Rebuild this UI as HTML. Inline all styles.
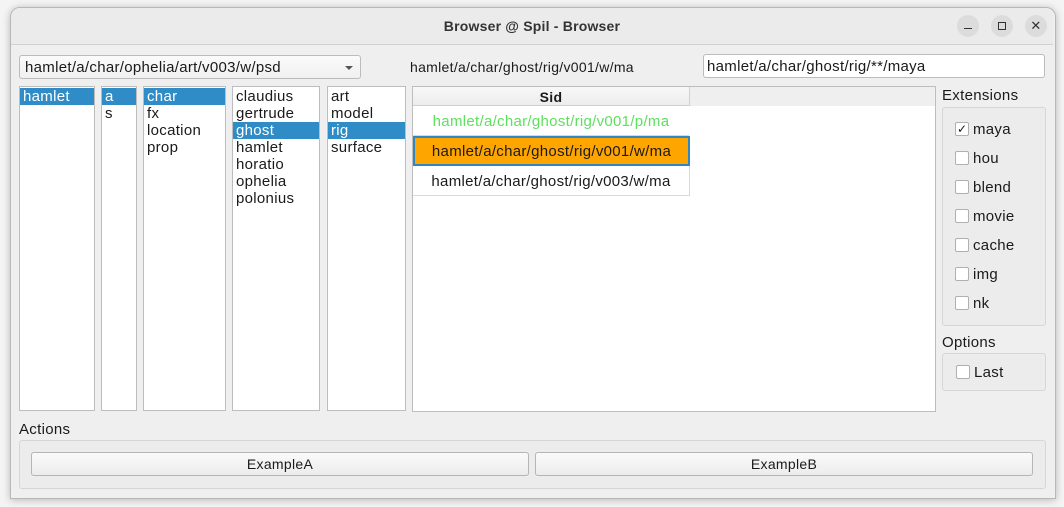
<!DOCTYPE html>
<html><head><style>
body{margin:0;width:1064px;height:507px;background:#f4f4f4;font-family:"Liberation Sans",sans-serif;font-size:15px;letter-spacing:0.3px;color:#1a1a1a;position:relative;overflow:hidden}
.a{position:absolute;white-space:nowrap}
.win{left:10px;top:7px;width:1044px;height:490px;background:#efefef;border:1px solid #b8b8b8;border-radius:10px 10px 0 0;box-shadow:0 1px 8px rgba(0,0,0,.25)}
.title{left:11px;top:8px;width:1042px;height:36px;background:#ebebeb;border-bottom:1px solid #d0d0d0;border-radius:9px 9px 0 0;text-align:center;line-height:37px;font-weight:bold;color:#333;font-size:14px;letter-spacing:0.2px}
.wb{width:22px;height:22px;border-radius:11px;background:#dcdcdc;top:15px}
.list{background:#fff;border:1px solid #bdbdbd;top:86px;height:325px;line-height:17px;box-sizing:border-box;padding-top:1px}
.list div{padding-left:3px;white-space:nowrap}
.sel{background:#308cc6;color:#fff}
.cb{width:12px;height:12px;background:#fff;border:1px solid #b0b0b0;border-radius:2px}
.grp{border:1px solid #d6d6d6;border-radius:3px;background:#ececec}
.btn{top:452px;height:22px;border:1px solid #b5b5b5;border-radius:3px;background:linear-gradient(#fafafa,#ececec);text-align:center;line-height:23px;font-size:14px}
.row{left:413px;width:276px;height:29px;line-height:32px;text-align:center;border-bottom:1px solid #d8d8d8;background:#fff}
</style></head><body>
<div class="a win"></div>
<div class="a title">Browser @ Spil - Browser</div>
<div class="a wb" style="left:957px"><div class="a" style="left:7px;top:13px;width:8px;height:1px;background:#333"></div></div>
<div class="a wb" style="left:991px"><div class="a" style="left:7px;top:7px;width:6px;height:6px;border:1px solid #333"></div></div>
<div class="a wb" style="left:1025px;text-align:center;line-height:22px;font-size:13px;color:#333">✕</div>

<div class="a" style="left:19px;top:55px;border:1px solid #bcbcbc;border-radius:3px;background:linear-gradient(#fbfbfb,#f0f0f0);line-height:24px;padding-left:5px;box-sizing:border-box;width:342px;height:24px">hamlet/a/char/ophelia/art/v003/w/psd<div class="a" style="right:7px;top:10px;border-left:4px solid transparent;border-right:4px solid transparent;border-top:4px solid #555"></div></div>
<div class="a" style="left:410px;top:59px;font-size:14px">hamlet/a/char/ghost/rig/v001/w/ma</div>
<div class="a" style="left:703px;top:54px;width:342px;height:24px;border:1px solid #bcbcbc;border-radius:3px;background:#fff;box-sizing:border-box;line-height:24px;padding-left:3px">hamlet/a/char/ghost/rig/**/maya</div>

<div class="a list" style="left:19px;width:76px"><div class="sel">hamlet</div></div>
<div class="a list" style="left:101px;width:36px"><div class="sel">a</div><div>s</div></div>
<div class="a list" style="left:143px;width:83px"><div class="sel">char</div><div>fx</div><div>location</div><div>prop</div></div>
<div class="a list" style="left:232px;width:88px"><div>claudius</div><div>gertrude</div><div class="sel">ghost</div><div>hamlet</div><div>horatio</div><div>ophelia</div><div>polonius</div></div>
<div class="a list" style="left:327px;width:79px"><div>art</div><div>model</div><div class="sel">rig</div><div>surface</div></div>

<div class="a" style="left:412px;top:86px;width:524px;height:326px;background:#fff;border:1px solid #bdbdbd;box-sizing:border-box"></div>
<div class="a" style="left:413px;top:87px;width:522px;height:19px;background:#efefef"></div>
<div class="a" style="left:413px;top:87px;width:277px;height:19px;background:linear-gradient(#f8f8f8,#ececec);border-right:1px solid #d0d0d0;border-bottom:1px solid #d0d0d0;box-sizing:border-box;text-align:center;font-weight:bold;line-height:20px;font-size:14px">Sid</div>
<div class="a row" style="top:106px;color:#5ee05e">hamlet/a/char/ghost/rig/v001/p/ma</div>
<div class="a row" style="top:136px;background:#ffa500;border:2px solid #2f86c0;box-sizing:border-box;width:277px;height:30px;line-height:28px">hamlet/a/char/ghost/rig/v001/w/ma</div>
<div class="a row" style="top:166px;border-right:1px solid #d8d8d8">hamlet/a/char/ghost/rig/v003/w/ma</div>

<div class="a" style="left:942px;top:87px">Extensions</div>
<div class="a grp" style="left:942px;top:107px;width:102px;height:217px"></div>
<div class="a cb" style="left:955px;top:122px;font-size:12px;line-height:12px;text-align:center;letter-spacing:0">✓</div><div class="a" style="left:973px;top:121px">maya</div>
<div class="a cb" style="left:955px;top:151px"></div><div class="a" style="left:973px;top:150px">hou</div>
<div class="a cb" style="left:955px;top:180px"></div><div class="a" style="left:973px;top:179px">blend</div>
<div class="a cb" style="left:955px;top:209px"></div><div class="a" style="left:973px;top:208px">movie</div>
<div class="a cb" style="left:955px;top:238px"></div><div class="a" style="left:973px;top:237px">cache</div>
<div class="a cb" style="left:955px;top:267px"></div><div class="a" style="left:973px;top:266px">img</div>
<div class="a cb" style="left:955px;top:296px"></div><div class="a" style="left:973px;top:295px">nk</div>

<div class="a" style="left:942px;top:334px">Options</div>
<div class="a grp" style="left:942px;top:353px;width:102px;height:36px"></div>
<div class="a cb" style="left:956px;top:365px"></div><div class="a" style="left:974px;top:364px">Last</div>

<div class="a" style="left:19px;top:421px">Actions</div>
<div class="a grp" style="left:19px;top:440px;width:1025px;height:47px"></div>
<div class="a btn" style="left:31px;width:496px">ExampleA</div>
<div class="a btn" style="left:535px;width:496px">ExampleB</div>
</body></html>
